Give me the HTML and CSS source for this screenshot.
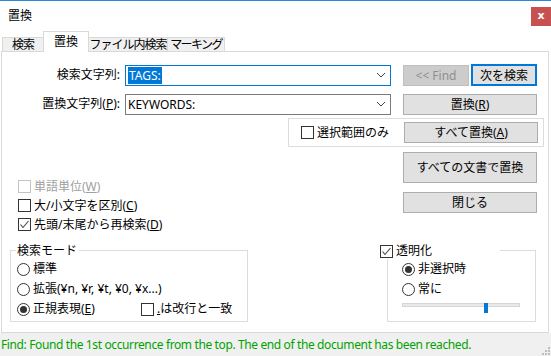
FILE: index.html
```html
<!DOCTYPE html>
<html>
<head>
	<meta charset="utf-8">
	<title>置換</title>
	<link rel="stylesheet" href="styles.css">
</head>
<body>
	<div class="win">
		<div class="titlebar">
			<span class="title">置換</span>
			<span class="close">x</span>
		</div>
		<div class="tabs">
			<div class="tab t1">検索</div>
			<div class="tab t2 active">置換</div>
			<div class="tab t3">ファイル内検索</div>
			<div class="tab t4">マーキング</div>
		</div>
		<div class="panel">
			<div class="row row_find">
				<label class="lbl">検索文字列:</label>
				<div class="combo focus"><span class="sel">TAGS:</span><svg class="arrow" width="10" height="6" viewBox="0 0 10 6"><polyline points="1,1 5,5 9,1" fill="none" stroke="#444" stroke-width="1"/></svg></div>
				<button type="button" class="btn btn_dis">&lt;&lt; Find</button>
				<button type="button" class="btn btn_def">次を検索</button>
			</div>
			<div class="row row_repl">
				<label class="lbl">置換文字列(<u>P</u>):</label>
				<div class="combo"><span>KEYWORDS:</span><svg class="arrow" width="10" height="6" viewBox="0 0 10 6"><polyline points="1,1 5,5 9,1" fill="none" stroke="#444" stroke-width="1"/></svg></div>
				<button type="button" class="btn btn_wide">置換(<u>R</u>)</button>
			</div>
			<div class="selframe">
				<span class="chk"></span><span class="txt">選択範囲のみ</span>
				<button type="button" class="btn btn_wide">すべて置換(<u>A</u>)</button>
			</div>
			<div class="mid">
				<div class="opts">
					<div class="opt dis"><span class="chk"></span><span class="txt">単語単位(<u>W</u>)</span></div>
					<div class="opt"><span class="chk"></span><span class="txt">大/小文字を区別(<u>C</u>)</span></div>
					<div class="opt"><span class="chk on"><svg width="11" height="11" viewBox="0 0 11 11"><polyline points="1.5,5.5 4,8.5 9.5,2" fill="none" stroke="#444" stroke-width="1.1"/></svg></span><span class="txt">先頭/末尾から再検索(<u>D</u>)</span></div>
				</div>
				<div class="acts">
					<button type="button" class="btn btn_wide btn_tall">すべての文書で置換</button>
					<button type="button" class="btn btn_wide btn_close">閉じる</button>
				</div>
			</div>
			<div class="groups">
				<div class="group mode">
					<div class="legend">検索モード</div>
					<div class="ropt"><span class="radio"></span><span class="txt">標準</span></div>
					<div class="ropt"><span class="radio"></span><span class="txt">拡張(¥n, ¥r, ¥t, ¥0, ¥x...)</span></div>
					<div class="ropt">
						<div class="regex"><span class="radio on"></span><span class="txt">正規表現(<u>E</u>)</span></div>
						<span class="chk"></span><span class="txt"><u>.</u>は改行と一致</span>
					</div>
				</div>
				<div class="group trans">
					<div class="legend legend_chk"><span class="chk on"><svg width="11" height="11" viewBox="0 0 11 11"><polyline points="1.5,5.5 4,8.5 9.5,2" fill="none" stroke="#444" stroke-width="1.1"/></svg></span><span class="txt">透明化</span></div>
					<div class="ropt"><span class="radio on"></span><span class="txt">非選択時</span></div>
					<div class="ropt"><span class="radio"></span><span class="txt">常に</span></div>
					<div class="slider"><div class="track"></div><div class="thumb"></div></div>
				</div>
			</div>
		</div>
		<div class="status">
			<span class="msg">Find: Found the 1st occurrence from the top. The end of the document has been reached.</span>
			<svg class="grip" width="9" height="9" viewBox="0 0 9 9"><g fill="#bdbdbd"><rect x="7" y="1" width="2" height="2"/><rect x="4" y="4" width="2" height="2"/><rect x="7" y="4" width="2" height="2"/><rect x="1" y="7" width="2" height="2"/><rect x="4" y="7" width="2" height="2"/><rect x="7" y="7" width="2" height="2"/></g></svg>
		</div>
	</div>
</body>
</html>
```

FILE: styles.css
```css
*{box-sizing:border-box;}
html,body{margin:0;padding:0;}
body{font-family:"Noto Sans","Noto Sans CJK JP",sans-serif;font-size:12px;color:#000;background:#fff;}
button{font:inherit;margin:0;padding:0;}
u{text-decoration:underline;text-underline-offset:1px;}

.win{width:551px;height:356px;overflow:hidden;border-top:1px solid #2b88d8;background:#fff;}
.titlebar{height:30px;display:flex;align-items:center;justify-content:space-between;padding-left:8px;}
.title{line-height:16px;}
.close{width:20px;height:19px;background:#c75050;color:#fff;font-family:"DejaVu Sans",sans-serif;font-weight:bold;font-size:11px;line-height:17px;text-align:center;}

.tabs{height:20px;display:flex;align-items:flex-end;padding-left:2px;position:relative;z-index:1;}
.tab{height:14px;border:1px solid #d9d9d9;border-bottom:none;background:#f0f0f0;margin-right:-1px;line-height:13px;text-align:center;white-space:nowrap;letter-spacing:-1px;}
.tab.active{height:21px;background:#fff;margin-bottom:-1px;line-height:19px;position:relative;z-index:2;letter-spacing:0;}
.t1{width:42px;}
.t2{width:46px;}
.t3{width:80px;}
.t4{width:58px;letter-spacing:-1.6px;}

.panel{height:282px;margin:0 2px 0 1px;border:1px solid #d9d9d9;}

.row{display:flex;align-items:center;height:22px;}
.row_find{margin-top:12px;}
.row_repl{margin-top:7px;}
.lbl{width:120px;text-align:right;padding-right:2px;line-height:16px;}
.combo{width:266px;height:21px;margin-left:3px;border:1px solid #7a7a7a;display:flex;align-items:center;padding-left:2px;line-height:15px;}
.combo.focus{border-color:#0078d7;}
.sel{background:#0078d7;color:#fff;padding:0 1px;line-height:17px;}
.combo span{flex:1;}
.combo .sel{flex:none;}
.combo.focus .arrow{margin-left:auto;}
.arrow{margin-right:4px;flex:none;}

.btn{height:21px;border:1px solid #adadad;background:#e1e1e1;color:#000;line-height:17px;text-align:center;}
.btn_dis{width:66px;margin-left:12px;background:#cccccc;border-color:#bfbfbf;color:#8f8f8f;}
.btn_def{width:66px;margin-left:2px;height:22px;border:2px solid #0078d7;}
.btn_wide{width:134px;margin-left:12px;}

.selframe{margin:3px 0 0 286px;width:256px;height:29px;border:1px solid #dcdcdc;display:flex;align-items:center;padding-left:12px;}
.selframe .btn{margin-left:auto;margin-right:5px;}

.chk{width:13px;height:13px;border:1px solid #333;background:#fff;display:inline-flex;align-items:center;justify-content:center;flex:none;}
.txt{margin-left:3px;line-height:16px;white-space:nowrap;}
.radio{width:13px;height:13px;border:1px solid #333;border-radius:50%;background:#fff;display:inline-flex;align-items:center;justify-content:center;flex:none;}
.radio.on::after{content:"";width:7px;height:7px;border-radius:50%;background:#333;}

.mid{display:flex;height:87px;}
.opts{width:389px;padding:30px 0 0 16px;}
.opt{display:flex;align-items:center;height:19px;}
.opt.dis .chk{border-color:#c4c4c4;}
.opt.dis .txt{color:#a0a0a0;}
.acts{display:flex;flex-direction:column;}
.btn_tall{height:31px;margin-top:5px;}
.btn_close{margin-top:9px;}

.groups{display:flex;margin-top:16px;}
.group{height:72px;border:1px solid #dcdcdc;}
.mode{width:238px;margin-left:8px;padding-left:6px;}
.trans{width:149px;margin-left:139px;padding-left:14px;}
.legend{margin:-8px 0 0 -1px;height:16px;line-height:16px;background:#fff;width:max-content;padding:0 2px 0 1px;}
.legend_chk{display:flex;align-items:center;width:120px;margin-left:-22px;padding:0;}
.ropt{display:flex;align-items:center;height:20px;}
.regex{display:flex;align-items:center;width:124px;}

.slider{position:relative;height:10px;margin-top:4px;width:118px;}
.track{margin-top:3px;height:4px;background:#e7eaea;border:1px solid #d6d6d6;}
.thumb{position:absolute;left:82px;top:0;width:4px;height:10px;background:#0078d7;}

.status{height:23px;background:#f0f0f0;display:flex;align-items:center;padding-left:1px;position:relative;}
.msg{color:#00a300;line-height:16px;white-space:nowrap;letter-spacing:-0.38px;}
.grip{position:absolute;right:1px;bottom:1px;}
```
